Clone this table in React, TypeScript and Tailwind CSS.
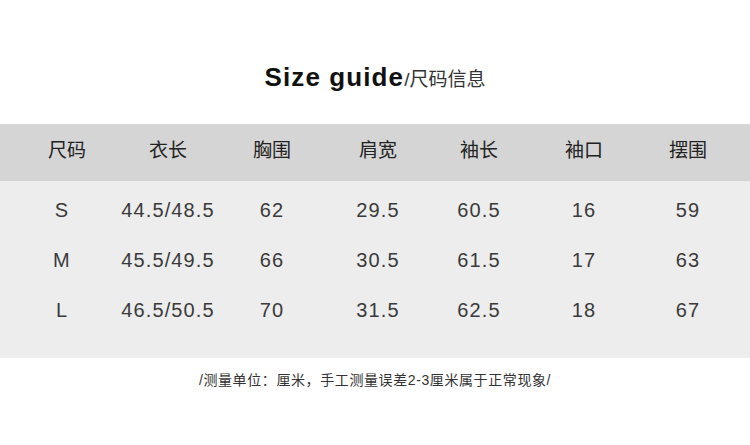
const headers = ["尺码", "衣长", "胸围", "肩宽", "袖长", "袖口", "摆围"];

const rows = [
  ["S", "44.5/48.5", "62", "29.5", "60.5", "16", "59"],
  ["M", "45.5/49.5", "66", "30.5", "61.5", "17", "63"],
  ["L", "46.5/50.5", "70", "31.5", "62.5", "18", "67"],
];

const cols = "grid grid-cols-[100px_102px_106px_106px_96px_114px_94px] pl-[17px]";

export default function App() {
  return (
    <div
      className="w-[750px] h-[445px] bg-white text-[#333]"
      style={{ fontFamily: '"Liberation Sans", "Noto Sans CJK SC", sans-serif' }}
    >
      <div className="flex items-baseline justify-center pt-[64px] h-[124px]">
        <span className="text-[26px] font-bold leading-none text-[#111] tracking-[1.1px]">Size guide</span>
        <span className="text-[19px] leading-none text-[#333]">/尺码信息</span>
      </div>

      <div className="bg-[#d5d5d5] h-[57px] flex items-center">
        <div className={cols + " w-full -mt-[3px]"}>
          {headers.map((h) => (
            <div key={h} className="text-center text-[19px] text-[#222]">
              {h}
            </div>
          ))}
        </div>
      </div>

      <div className="bg-[#ededed] h-[177px] pt-[4px] flex flex-col">
        {rows.map((r) => (
          <div key={r[0]} className={cols + " h-[50px] items-center"}>
            {r.map((c, i) => (
              <div
                key={i}
                className={
                  "text-center text-[20px] tracking-[1.1px] text-[#3a3a3a]" + (i === 0 ? " pr-[10px]" : "")
                }
              >
                {c}
              </div>
            ))}
          </div>
        ))}
      </div>

      <div className="text-center text-[14px] tracking-[0.6px] text-[#333] pt-[12px]">
        /测量单位：厘米，手工测量误差2-3厘米属于正常现象/
      </div>
    </div>
  );
}
